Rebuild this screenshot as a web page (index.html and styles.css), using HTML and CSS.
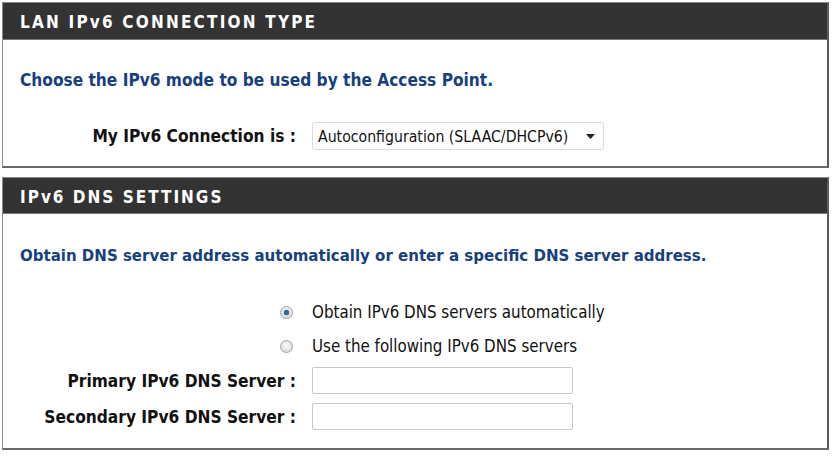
FILE: index.html
```html
<!DOCTYPE html>
<html>
<head>
<meta charset="utf-8">
<link rel="stylesheet" href="styles.css">
</head>
<body>
<div class="page">
  <section class="box box-lan">
    <h2 class="box-head">LAN IPv6 CONNECTION TYPE</h2>
    <div class="box-body">
      <p class="intro">Choose the IPv6 mode to be used by the Access Point.</p>
      <div class="form-grid">
        <label class="lbl">My IPv6 Connection is :</label>
        <div class="select">
          <span class="select-text">Autoconfiguration (SLAAC/DHCPv6)</span>
          <svg class="caret" width="9" height="5" viewBox="0 0 9 5"><path d="M0 0h9L4.5 5z" fill="#222"/></svg>
        </div>
      </div>
    </div>
  </section>
  <section class="box box-dns">
    <h2 class="box-head">IPv6 DNS SETTINGS</h2>
    <div class="box-body">
      <p class="intro">Obtain DNS server address automatically or enter a specific DNS server address.</p>
      <div class="form-grid dns-grid">
        <span class="radio-cell"><span class="radio on"></span></span>
        <span class="opt">Obtain IPv6 DNS servers automatically</span>
        <span class="radio-cell"><span class="radio"></span></span>
        <span class="opt">Use the following IPv6 DNS servers</span>
        <label class="lbl">Primary IPv6 DNS Server :</label>
        <div class="field"></div>
        <label class="lbl">Secondary IPv6 DNS Server :</label>
        <div class="field"></div>
      </div>
    </div>
  </section>
</div>
</body>
</html>
```
FILE: styles.css
```css
* { box-sizing: border-box; }
html, body { margin: 0; padding: 0; background: #fff; }
body { font-family: "DejaVu Sans Condensed", "DejaVu Sans", sans-serif; }
.page { padding: 2px 3px 0 2px; display: flex; flex-direction: column; gap: 9px; }
.box { border: 1px solid #8a8a8a; border-right: 2px solid #5a5a5a; border-bottom: 2px solid #6a6a6a; }
.box-lan { height: 166px; }
.box-dns { height: 273px; }
.box-head { margin: 0; background: #333; color: #fff; font-size: 17px; font-weight: bold; letter-spacing: 2.2px; height: 37px; line-height: 35px; padding: 2px 0 0 17px; border-bottom: 1px solid #777; }
.box-dns .box-head { height: 36px; line-height: 34px; letter-spacing: 2px; }
.box-body { padding: 0 0 0 17px; }
.intro { margin: 0; color: #17407e; font-weight: bold; font-size: 17.15px; line-height: 20px; }
.box-lan .intro { padding-top: 30px; }
.box-dns .intro { padding-top: 31px; font-size: 16.7px; }
.form-grid { display: grid; grid-template-columns: 276px 1fr; column-gap: 16px; align-items: center; }
.box-lan .form-grid { margin-top: 32px; }
.lbl { text-align: right; font-weight: bold; font-size: 17.2px; color: #111; line-height: 20px; }
.select { width: 292px; height: 28px; border: 1px solid #dcdcdc; border-radius: 2px; display: flex; align-items: center; justify-content: space-between; padding: 0 8px 0 5px; font-size: 15.7px; color: #111; }
.dns-grid { margin-top: 30px; row-gap: 0; }
.radio-cell { display: flex; justify-content: flex-end; padding-right: 3px; height: 34px; align-items: center; }
.radio { width: 13px; height: 13px; border-radius: 50%; border: 1px solid #a0a0a0; background: radial-gradient(circle at 50% 40%, #fafafa, #d4d4d4); position: relative; }
.radio.on::after { content: ""; position: absolute; left: 3px; top: 3px; width: 5px; height: 5px; border-radius: 50%; background: #2a66b0; box-shadow: 0 0 1px #0d3d80; }
.opt { font-size: 16.8px; color: #111; line-height: 20px; }
.field { width: 261px; height: 27px; border: 1px solid #c8c8c8; border-radius: 2px; margin: 4px 0 5px; }
```
